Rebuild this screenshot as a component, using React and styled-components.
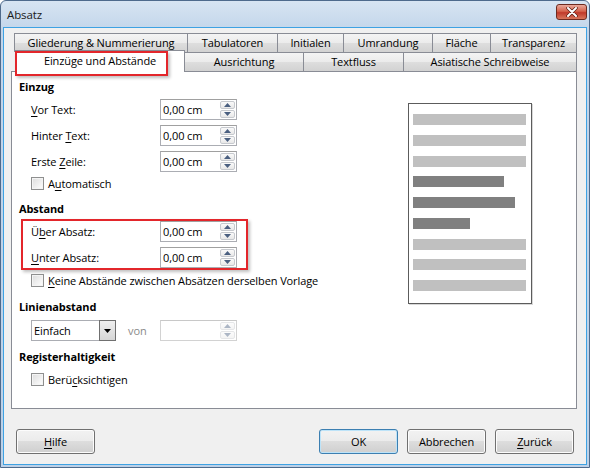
import React from "react";
import styled, { createGlobalStyle } from "styled-components";

const GlobalStyle = createGlobalStyle`
  html, body {
    margin: 0;
    padding: 0;
    background: #ffffff;
  }
  body {
    font-family: "Open Sans", "Noto Sans", "Liberation Sans", sans-serif;
    font-size: 11px;
    letter-spacing: -0.1px;
    color: #000;
  }
  * {
    box-sizing: border-box;
  }
`;

const Window = styled.div`
  width: 590px;
  height: 468px;
  border: 1px solid #4e6a8c;
  border-radius: 6px 6px 0 0;
  background: linear-gradient(#d7e4f2, #c2d5ea 30px, #bcd1e8);
  display: flex;
  flex-direction: column;
  overflow: hidden;
`;

const TitleBar = styled.div`
  height: 26px;
  display: flex;
  align-items: center;
  padding: 0 2px 0 6px;
  font-size: 11.5px;
`;

const Title = styled.span`
  color: #1a1a1a;
`;

const CloseButton = styled.div`
  margin-left: auto;
  width: 31px;
  height: 16px;
  margin-top: -5px;
  border: 1px solid #6e2a1f;
  border-radius: 3px;
  background: linear-gradient(#e9a99b, #d5634c 45%, #c0392a 55%, #d8775c);
  display: flex;
  align-items: center;
  justify-content: center;
`;

const Client = styled.div`
  flex: 1;
  margin: 0 2px 2px 2px;
  border: 1px solid #3ea2e3;
  background: #f0f0f0;
  display: flex;
  flex-direction: column;
  padding: 5px 0 0 7px;
`;

const TabArea = styled.div`
  position: relative;
  width: 566px;
`;

const TabRow = styled.div`
  display: flex;
  align-items: flex-end;
  height: 19px;
  padding-left: ${(p) => p.$offset}px;
`;

const Tab = styled.div`
  position: relative;
  width: ${(p) => p.$w}px;
  height: 19px;
  margin-left: -1px;
  border: 1px solid #898c95;
  border-bottom: none;
  background: linear-gradient(#f4f4f4, #ebebeb 50%, #dedede 50%, #d2d2d2);
  display: flex;
  align-items: center;
  justify-content: center;
  white-space: nowrap;
  padding-bottom: 1px;

  &:first-child {
    margin-left: 0;
  }
`;

const ActiveTab = styled(Tab)`
  height: 22px;
  margin-top: -2px;
  margin-bottom: -1px;
  background: #ffffff;
  z-index: 2;
  padding-bottom: 3px;
`;

const Marker = styled.div`
  position: absolute;
  left: 4px;
  top: 18px;
  width: 153px;
  height: 25px;
  border: 2px solid #e3262b;
  box-shadow: 2px 2px 3px rgba(0, 0, 0, 0.25);
  z-index: 3;
  pointer-events: none;
`;

const Panel = styled.div`
  position: relative;
  z-index: 1;
  width: 566px;
  height: 338px;
  border: 1px solid #898c95;
  background: #ffffff;
  display: flex;
  padding: 7px 0 0 7px;
`;

const LeftColumn = styled.div`
  flex: 1;
  display: flex;
  flex-direction: column;
`;

const Heading = styled.div`
  font-weight: bold;
  height: 16px;
  line-height: 16px;
  margin-top: ${(p) => p.$mt || 0}px;
`;

const FieldRow = styled.div`
  display: flex;
  align-items: center;
  height: 21px;
  padding-left: 12px;
  margin-top: ${(p) => p.$mt || 0}px;
`;

const Label = styled.span`
  width: 129px;
`;

const Key = styled.span`
  text-decoration: underline;
  text-underline-offset: 2px;
`;

const SpinBox = styled.div`
  width: 77px;
  height: 21px;
  display: flex;
  align-items: center;
  border: 1px solid ${(p) => (p.$disabled ? "#d2d2d2" : "#abadb3")};
  border-top-color: ${(p) => (p.$disabled ? "#c8c8c8" : "#a0a0a0")};
  background: #ffffff;
  padding-left: 2px;
`;

const Spinner = styled.div`
  margin-left: auto;
  margin-right: 1px;
  display: flex;
  flex-direction: column;
  gap: 1px;
  opacity: ${(p) => (p.$disabled ? 0.45 : 1)};
`;

const SpinButton = styled.div`
  width: 15px;
  height: 8px;
  border: 1px solid #c6c9ce;
  border-radius: 2px;
  background: linear-gradient(#fafafa, #e8e8e8);
  display: flex;
  align-items: center;
  justify-content: center;
`;

const CheckRow = styled.label`
  display: flex;
  align-items: center;
  height: 16px;
  padding-left: 12px;
  margin-top: ${(p) => p.$mt || 0}px;
`;

const CheckBox = styled.span`
  width: 13px;
  height: 13px;
  border: 1px solid #8e8f8f;
  background: linear-gradient(135deg, #dcdcdc, #ffffff);
  box-shadow: inset 0 0 0 1px #f4f4f4;
  margin-right: 4px;
`;

const Highlight = styled.div`
  margin: 2px 0 0 2px;
  width: 227px;
  border: 2px solid #e3262b;
  box-shadow: 2px 2px 3px rgba(0, 0, 0, 0.25);
  display: flex;
  flex-direction: column;
  gap: 5px;

  ${FieldRow} {
    padding-left: 8px;
  }
`;

const Select = styled.div`
  width: 85px;
  height: 21px;
  display: flex;
  border: 1px solid #abadb3;
  background: #ffffff;
`;

const SelectValue = styled.span`
  flex: 1;
  padding-left: 2px;
  line-height: 19px;
`;

const SelectButton = styled.span`
  width: 17px;
  border: 1px solid #707070;
  margin: -1px -1px -1px 0;
  background: linear-gradient(#efefef, #d6d6d6);
  display: flex;
  align-items: center;
  justify-content: center;
`;

const VonLabel = styled.span`
  color: #8a8a8a;
  width: 44px;
  padding-left: 12px;
`;

const Preview = styled.div`
  width: 124px;
  height: 201px;
  margin: 24px 44px 0 0;
  border: 1px solid #5c5c5c;
  box-shadow: 1px 1px 0 #d8d8d8;
  background: #fff;
  display: flex;
  flex-direction: column;
  gap: 9.75px;
  padding: 10px 0 0 4px;
`;

const PreviewLine = styled.div`
  height: 11px;
  width: ${(p) => p.$w}px;
  background: ${(p) => (p.$dark ? "#808080" : "#c0c0c0")};
`;

const Footer = styled.div`
  display: flex;
  gap: 9px;
  margin-top: 20px;
  padding-right: 12px;
  margin-left: 5px;
`;

const Button = styled.div`
  width: 79px;
  height: 25px;
  border: 1px solid ${(p) => (p.$default ? "#3c7fb1" : "#707070")};
  border-radius: 3px;
  background: linear-gradient(#f2f2f2, #ebebeb 50%, #dddddd 50%, #cfcfcf);
  box-shadow: inset 0 0 0 1px ${(p) => (p.$default ? "#bde3f8" : "#fcfcfc")};
  display: flex;
  align-items: center;
  justify-content: center;
  margin-left: ${(p) => (p.$push ? "auto" : "0")};
`;

const Up = () => (
  <svg width="7" height="4" viewBox="0 0 7 4">
    <path d="M0 4 L3.5 0 L7 4 Z" fill="#4a5f80" />
  </svg>
);

const Down = () => (
  <svg width="7" height="4" viewBox="0 0 7 4">
    <path d="M0 0 L3.5 4 L7 0 Z" fill="#4a5f80" />
  </svg>
);

const Spin = ({ value, disabled }) => (
  <SpinBox $disabled={disabled}>
    {value}
    <Spinner $disabled={disabled}>
      <SpinButton>
        <Up />
      </SpinButton>
      <SpinButton>
        <Down />
      </SpinButton>
    </Spinner>
  </SpinBox>
);

const row1 = [
  ["Gliederung & Nummerierung", 174],
  ["Tabulatoren", 91],
  ["Initialen", 67],
  ["Umrandung", 90],
  ["Fläche", 59],
  ["Transparenz", 87],
];

const row2 = [
  ["Ausrichtung", 120],
  ["Textfluss", 101],
  ["Asiatische Schreibweise", 174],
];

const lines = [
  [113],
  [113],
  [113],
  [91, true],
  [102, true],
  [57, true],
  [113],
  [113],
  [113],
];

export default function App() {
  return (
    <>
      <GlobalStyle />
      <Window>
        <TitleBar>
          <Title>Absatz</Title>
          <CloseButton>
            <svg width="12" height="10" viewBox="0 0 12 10">
              <path
                d="M2 1 L10 9 M10 1 L2 9"
                stroke="#5a1c12"
                strokeWidth="3.4"
                strokeLinecap="round"
              />
              <path
                d="M2 1 L10 9 M10 1 L2 9"
                stroke="#ffffff"
                strokeWidth="2"
                strokeLinecap="round"
              />
            </svg>
          </CloseButton>
        </TitleBar>
        <Client>
          <TabArea>
            <TabRow $offset={3}>
              {row1.map(([t, w]) => (
                <Tab key={t} $w={w}>
                  {t}
                </Tab>
              ))}
            </TabRow>
            <TabRow $offset={4}>
              <ActiveTab $w={170}>Einzüge und Abstände</ActiveTab>
              {row2.map(([t, w]) => (
                <Tab key={t} $w={w}>
                  {t}
                </Tab>
              ))}
            </TabRow>
            <Marker />
            <Panel>
              <LeftColumn>
                <Heading>Einzug</Heading>
                <FieldRow $mt={4}>
                  <Label>
                    <Key>V</Key>or Text:
                  </Label>
                  <Spin value="0,00 cm" />
                </FieldRow>
                <FieldRow $mt={5}>
                  <Label>
                    Hinter <Key>T</Key>ext:
                  </Label>
                  <Spin value="0,00 cm" />
                </FieldRow>
                <FieldRow $mt={5}>
                  <Label>
                    Erste <Key>Z</Key>eile:
                  </Label>
                  <Spin value="0,00 cm" />
                </FieldRow>
                <CheckRow $mt={3}>
                  <CheckBox />
                  A<Key>u</Key>tomatisch
                </CheckRow>

                <Heading $mt={10}>Abstand</Heading>
                <Highlight>
                  <FieldRow>
                    <Label>
                      Ü<Key>b</Key>er Absatz:
                    </Label>
                    <Spin value="0,00 cm" />
                  </FieldRow>
                  <FieldRow>
                    <Label>
                      <Key>U</Key>nter Absatz:
                    </Label>
                    <Spin value="0,00 cm" />
                  </FieldRow>
                </Highlight>
                <CheckRow $mt={2}>
                  <CheckBox />
                  <Key>K</Key>eine Abstände zwischen Absätzen derselben Vorlage
                </CheckRow>

                <Heading $mt={11}>Linienabstand</Heading>
                <FieldRow $mt={5}>
                  <Select>
                    <SelectValue>Einfach</SelectValue>
                    <SelectButton>
                      <svg width="7" height="4" viewBox="0 0 7 4">
                        <path d="M0 0 L3.5 4 L7 0 Z" fill="#000" />
                      </svg>
                    </SelectButton>
                  </Select>
                  <VonLabel>von</VonLabel>
                  <Spin value="" disabled />
                </FieldRow>

                <Heading $mt={8}>Registerhaltigkeit</Heading>
                <CheckRow $mt={6}>
                  <CheckBox />
                  Berü<Key>c</Key>ksichtigen
                </CheckRow>
              </LeftColumn>
              <Preview>
                {lines.map(([w, dark], i) => (
                  <PreviewLine key={i} $w={w} $dark={dark} />
                ))}
              </Preview>
            </Panel>
          </TabArea>
          <Footer>
            <Button>
              <span>
                <Key>H</Key>ilfe
              </span>
            </Button>
            <Button $default $push>
              OK
            </Button>
            <Button>Abbrechen</Button>
            <Button>
              <span>
                <Key>Z</Key>urück
              </span>
            </Button>
          </Footer>
        </Client>
      </Window>
    </>
  );
}
